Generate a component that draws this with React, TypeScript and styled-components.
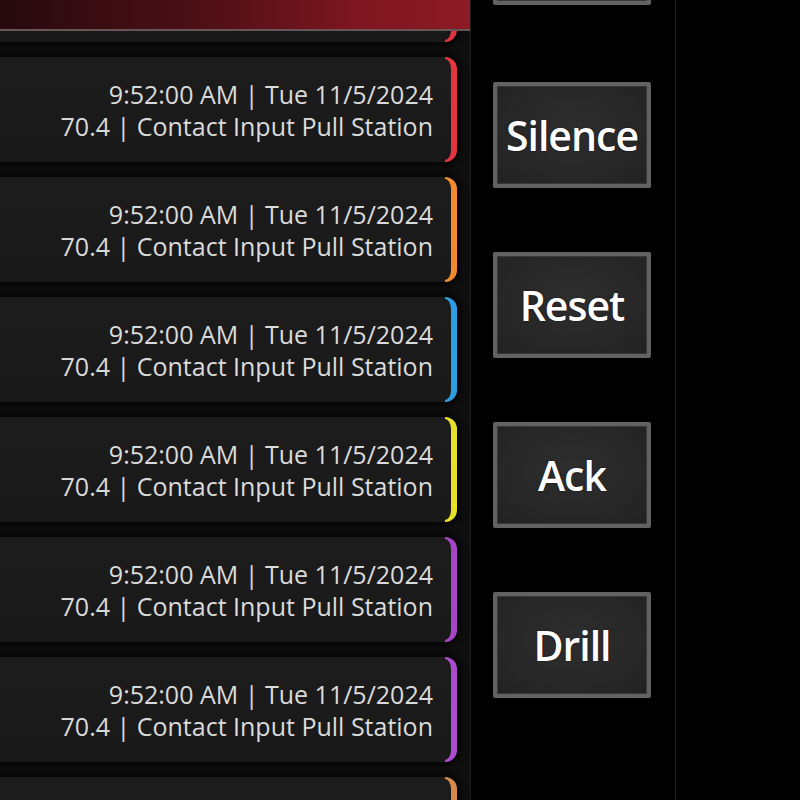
import { useLayoutEffect, useRef } from 'react';
import styled, { createGlobalStyle } from 'styled-components';

interface AlarmEvent {
  id: number;
  time: string;
  detail: string;
  color: string;
}

const events: AlarmEvent[] = [
  { id: 0, time: '9:52:00 AM | Tue 11/5/2024', detail: '70.4 | Contact Input Pull Station', color: '#e2333f' },
  { id: 1, time: '9:52:00 AM | Tue 11/5/2024', detail: '70.4 | Contact Input Pull Station', color: '#e3343f' },
  { id: 2, time: '9:52:00 AM | Tue 11/5/2024', detail: '70.4 | Contact Input Pull Station', color: '#f08a2c' },
  { id: 3, time: '9:52:00 AM | Tue 11/5/2024', detail: '70.4 | Contact Input Pull Station', color: '#2c9ee2' },
  { id: 4, time: '9:52:00 AM | Tue 11/5/2024', detail: '70.4 | Contact Input Pull Station', color: '#e6e02a' },
  { id: 5, time: '9:52:00 AM | Tue 11/5/2024', detail: '70.4 | Contact Input Pull Station', color: '#a645c6' },
  { id: 6, time: '9:52:00 AM | Tue 11/5/2024', detail: '70.4 | Contact Input Pull Station', color: '#ad4ccf' },
  { id: 7, time: '9:52:00 AM | Tue 11/5/2024', detail: '70.4 | Contact Input Pull Station', color: '#d78a4c' },
];

const actions = ['Silence', 'Reset', 'Ack', 'Drill'];

// both panes are scrolled lists; restore the scroll offset they had in the shot
function useScrollOffset<T extends HTMLElement>(offset: number) {
  const ref = useRef<T>(null);
  useLayoutEffect(() => {
    if (ref.current) ref.current.scrollTop = offset;
  }, [offset]);
  return ref;
}

export default function App() {
  const listRef = useScrollOffset<HTMLDivElement>(94);
  const railRef = useScrollOffset<HTMLDivElement>(101);

  return (
    <>
      <GlobalStyle />
      <Screen>
        <EventPane>
          <Header />
          <EventList ref={listRef}>
            {events.map((item) => (
              <EventCard key={item.id}>
                <EventText>
                  <span>{item.time}</span>
                  <span>{item.detail}</span>
                </EventText>
                <Bracket $color={item.color} />
              </EventCard>
            ))}
          </EventList>
        </EventPane>

        <ActionRail ref={railRef}>
          <ActionButton aria-hidden tabIndex={-1} />
          <ActionGroup>
            {actions.map((label) => (
              <ActionButton key={label}>{label}</ActionButton>
            ))}
          </ActionGroup>
        </ActionRail>

        <EmptyArea />
      </Screen>
    </>
  );
}

const GlobalStyle = createGlobalStyle`
  html, body {
    margin: 0;
    padding: 0;
    background: #000;
  }

  body {
    font-family: "Open Sans", "Noto Sans", sans-serif;
  }
`;

const Screen = styled.div`
  display: flex;
  width: 800px;
  height: 800px;
  overflow: hidden;
  background: #000;
`;

const EventPane = styled.section`
  display: flex;
  flex-direction: column;
  width: 470px;
  flex-shrink: 0;
  background: #0f0f0f;
  border-right: 1px solid #1d1d1d;
`;

const Header = styled.div`
  height: 29px;
  flex-shrink: 0;
  background: linear-gradient(90deg, #260a0e 0%, #4a0f16 40%, #7c1620 75%, #8d1a24 100%);
  border-bottom: 2px solid #6a5556;
`;

const EventList = styled.div`
  flex: 1;
  display: flex;
  flex-direction: column;
  gap: 15px;
  overflow: hidden;
  padding-right: 13px;
`;

const EventCard = styled.div`
  display: flex;
  height: 105px;
  flex-shrink: 0;
  background: linear-gradient(180deg, #1c1c1c 0%, #191919 100%);
  box-shadow: 0 0 7px 3px rgba(0, 0, 0, 0.8);
  border-radius: 0 12px 12px 0;
`;

const EventText = styled.div`
  flex: 1;
  display: flex;
  flex-direction: column;
  justify-content: center;
  align-items: flex-end;
  padding-right: 12px;
  color: #dadada;
  font-size: 25px;
  line-height: 32px;
  white-space: nowrap;
`;

const Bracket = styled.div<{ $color: string }>`
  width: 12px;
  flex-shrink: 0;
  box-sizing: border-box;
  border: 6px solid ${({ $color }) => $color};
  border-left: 0;
  border-top-width: 2px;
  border-bottom-width: 2px;
  border-radius: 0 13px 13px 0;
`;

const ActionRail = styled.div`
  width: 205px;
  flex-shrink: 0;
  display: flex;
  flex-direction: column;
  align-items: flex-start;
  overflow: hidden;
  padding: 0 0 160px 22px;
  box-sizing: border-box;
  border-right: 1px solid #1a1a1a;
`;

const ActionGroup = styled.div`
  display: flex;
  flex-direction: column;
  gap: 64px;
  margin-top: 77px;
  padding-bottom: 160px;
`;

const ActionButton = styled.button`
  width: 158px;
  height: 106px;
  flex-shrink: 0;
  box-sizing: border-box;
  border: 4px solid #626262;
  border-radius: 2px;
  background: radial-gradient(ellipse at 50% 45%, #2e2e2e 0%, #262626 70%, #222 100%);
  box-shadow: inset 0 0 0 1px #3a3a3a;
  color: #fff;
  font-family: "Open Sans", "Noto Sans", sans-serif;
  font-size: 41px;
  font-weight: 600;
  letter-spacing: -1px;
  padding: 0;
  text-shadow: 0 0 2px rgba(0, 0, 0, 0.6);
`;

const EmptyArea = styled.div`
  flex: 1;
  background: #000;
`;
